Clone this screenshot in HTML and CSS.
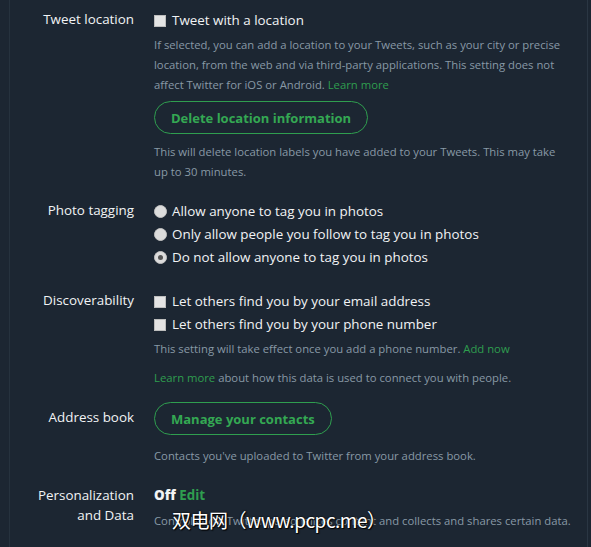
FILE: index.html
```html
<!DOCTYPE html>
<html lang="en">
<head>
    <meta charset="UTF-8">
    <title>Privacy and safety</title>
    <link rel="stylesheet" href="styles.css">
</head>
<body>
    <div class="settings">
        <div class="row location">
            <div class="label">Tweet location</div>
            <div class="content">
                <div class="option"><span class="check"></span>Tweet with a location</div>
                <p class="desc">If selected, you can add a location to your Tweets, such as your city or precise location, from the web and via third-party applications. This setting does not affect Twitter for iOS or Android. <a href="#">Learn more</a></p>
                <button class="pill">Delete location information</button>
                <p class="desc">This will delete location labels you have added to your Tweets. This may take up to 30 minutes.</p>
            </div>
        </div>
        <div class="row tagging">
            <div class="label">Photo tagging</div>
            <div class="content">
                <div class="option"><span class="radio"></span>Allow anyone to tag you in photos</div>
                <div class="option"><span class="radio"></span>Only allow people you follow to tag you in photos</div>
                <div class="option"><span class="radio on"></span>Do not allow anyone to tag you in photos</div>
            </div>
        </div>
        <div class="row discover">
            <div class="label">Discoverability</div>
            <div class="content">
                <div class="option"><span class="check"></span>Let others find you by your email address</div>
                <div class="option"><span class="check"></span>Let others find you by your phone number</div>
                <p class="desc">This setting will take effect once you add a phone number. <a href="#">Add now</a></p>
                <p class="desc more"><a href="#">Learn more</a> about how this data is used to connect you with people.</p>
            </div>
        </div>
        <div class="row book">
            <div class="label">Address book</div>
            <div class="content">
                <button class="pill">Manage your contacts</button>
                <p class="desc">Contacts you've uploaded to Twitter from your address book.</p>
            </div>
        </div>
        <div class="row last">
            <div class="label">Personalization<br>and Data</div>
            <div class="content">
                <div class="state"><b>Off</b> <a href="#">Edit</a></div>
                <p class="desc">Controls how Twitter personalizes content and collects and shares certain data.</p>
            </div>
        </div>
    </div>
    <div class="mark">双电网（www.pcpc.me）</div>
</body>
</html>
```
FILE: styles.css
```css
html, body {
    margin: 0;
    height: 100%;
}
body {
    background-color: #1c2632;
    font-family: "Open Sans", "Noto Sans", sans-serif;
    color: #f1f3f5;
    position: relative;
    overflow: hidden;
    border-left: 1px solid #26323e;
    margin-left: 9px;
    border-right: 1px solid #2a3643;
    margin-right: 3px;
}
.settings {
    padding-top: 9px;
    margin-left: -10px;
}
.row {
    display: flex;
    margin-bottom: 18px;
}
.tagging {
    margin-bottom: 21px;
}
.discover {
    margin-bottom: 14px;
}
.book {
    margin-bottom: 19px;
}
.label {
    width: 134px;
    text-align: right;
    font-size: 13.4px;
    line-height: 20px;
    flex-shrink: 0;
}
.content {
    margin-left: 20px;
    width: 418px;
}
.option {
    font-size: 13.4px;
    line-height: 23px;
    display: flex;
    align-items: center;
}
.check {
    width: 10px;
    height: 10px;
    background: #e4e4e4;
    border: 1px solid #bdbdbd;
    margin-right: 6px;
    flex-shrink: 0;
}
.radio {
    width: 11px;
    height: 11px;
    border-radius: 50%;
    background: #dcdcdc;
    border: 1px solid #c4c4c4;
    margin-right: 5px;
    flex-shrink: 0;
    position: relative;
}
.radio.on::after {
    content: "";
    position: absolute;
    left: 3px;
    top: 3px;
    width: 5px;
    height: 5px;
    border-radius: 50%;
    background: #555;
}
.desc {
    font-size: 11.3px;
    line-height: 20px;
    color: #8899a6;
    margin: 3px 0 0;
}
.desc.more {
    margin-top: 9px;
}
a {
    color: #2f9e4f;
    text-decoration: none;
}
.pill {
    display: block;
    margin: 6px 0 8px;
    height: 33px;
    padding: 0 16px;
    border: 1px solid #2f9e4f;
    border-radius: 17px;
    background: transparent;
    color: #34a853;
    font-family: "Open Sans", sans-serif;
    font-weight: bold;
    font-size: 13px;
}
.book .pill {
    margin: 0 0 11px;
}
.book .label {
    padding-top: 5px;
}
.state {
    font-size: 13.4px;
    line-height: 20px;
}
.state b {
    font-weight: 800;
}
.state a {
    font-weight: bold;
}
.last .desc {
    margin-top: 6px;
}
.mark {
    position: absolute;
    left: 162px;
    top: 506px;
    font-family: "Noto Sans CJK SC", sans-serif;
    font-size: 19px;
    letter-spacing: -0.5px;
    color: #fff;
    text-shadow: 1px 1px 1px #000, 0 0 2px #000;
}
```
